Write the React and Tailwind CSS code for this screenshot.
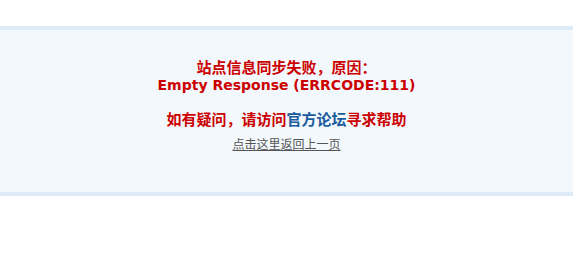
import React from 'react';

export default function App() {
  return (
    <div className="min-h-[274px] bg-white pt-[26px]" style={{ fontFamily: 'Verdana, "DejaVu Sans", "Noto Sans CJK SC", sans-serif' }}>
      <div className="border-y-4 border-[#deebf8] bg-[#f2f8fc] h-[170px] pt-[29px] text-center">
        <p className="text-[15px] leading-[18px] font-bold text-[#cc0000]">站点信息同步失败，原因：</p>
        <p className="text-[14px] leading-[17px] font-bold text-[#cc0000]">Empty Response (ERRCODE:111)</p>
        <p className="mt-[17px] text-[15px] leading-[18px] font-bold text-[#cc0000]">
          如有疑问，请访问<a href="#" className="text-[#1a5b9c]">官方论坛</a>寻求帮助
        </p>
        <p className="mt-[9px] text-[12px] leading-[14px]">
          <a href="#" className="text-[#555555] underline">点击这里返回上一页</a>
        </p>
      </div>
    </div>
  );
}
